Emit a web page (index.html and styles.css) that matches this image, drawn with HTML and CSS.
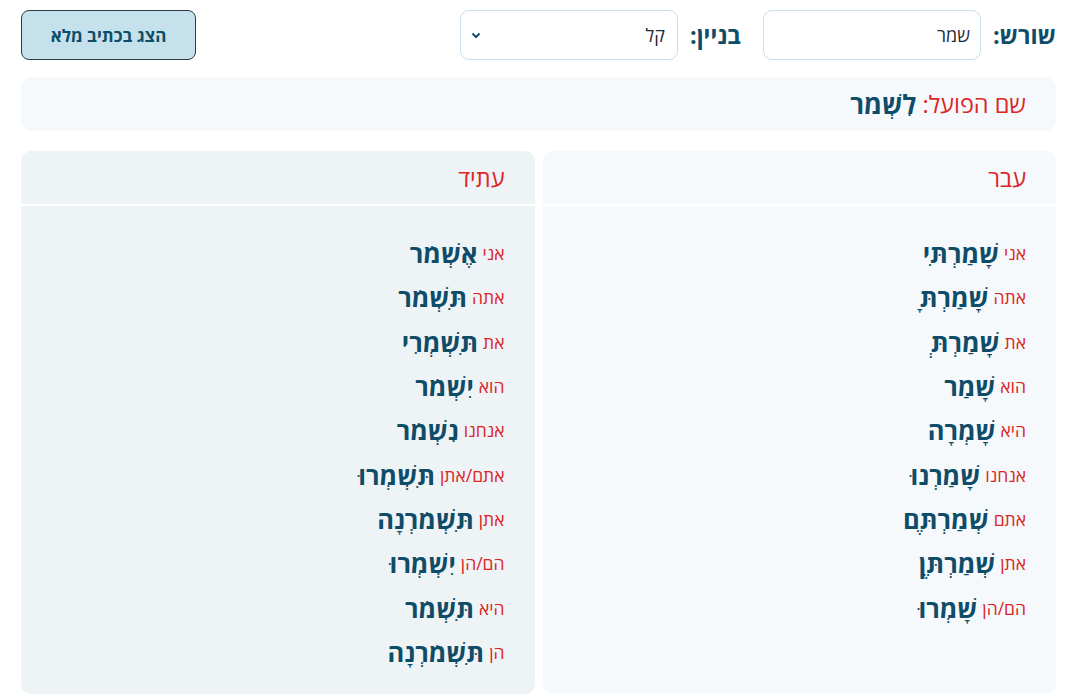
FILE: index.html
```html
<!DOCTYPE html>
<html lang="he" dir="rtl">
<head>
<meta charset="utf-8">
<link rel="stylesheet" href="styles.css">
</head>
<body>
<div class="page">
  <div class="toolbar">
    <div class="fields">
      <label class="label">שורש:</label>
      <div class="input">שמר</div>
      <label class="label">בניין:</label>
      <div class="select"><span>קל</span>
        <svg class="chev" width="10" height="7" viewBox="0 0 10 7"><path d="M1.5 1.5 L5 5 L8.5 1.5" fill="none" stroke="#164e63" stroke-width="2"/></svg>
      </div>
    </div>
    <button class="btn">הצג בכתיב מלא</button>
  </div>

  <div class="infinitive"><span class="red">שם הפועל:</span> <b class="verb">לִשְׁמֹר</b></div>

  <div class="tenses">
    <div class="tense past">
      <div class="head">עבר</div>
      <div class="body">
        <div class="row"><span class="pr">אני</span> <b class="verb">שָׁמַרְתִּי</b></div>
        <div class="row"><span class="pr">אתה</span> <b class="verb">שָׁמַרְתָּ</b></div>
        <div class="row"><span class="pr">את</span> <b class="verb">שָׁמַרְתְּ</b></div>
        <div class="row"><span class="pr">הוא</span> <b class="verb">שָׁמַר</b></div>
        <div class="row"><span class="pr">היא</span> <b class="verb">שָׁמְרָה</b></div>
        <div class="row"><span class="pr">אנחנו</span> <b class="verb">שָׁמַרְנוּ</b></div>
        <div class="row"><span class="pr">אתם</span> <b class="verb">שְׁמַרְתֶּם</b></div>
        <div class="row"><span class="pr">אתן</span> <b class="verb">שְׁמַרְתֶּן</b></div>
        <div class="row"><span class="pr">הם/הן</span> <b class="verb">שָׁמְרוּ</b></div>
      </div>
    </div>
    <div class="tense future">
      <div class="head">עתיד</div>
      <div class="body">
        <div class="row"><span class="pr">אני</span> <b class="verb">אֶשְׁמֹר</b></div>
        <div class="row"><span class="pr">אתה</span> <b class="verb">תִּשְׁמֹר</b></div>
        <div class="row"><span class="pr">את</span> <b class="verb">תִּשְׁמְרִי</b></div>
        <div class="row"><span class="pr">הוא</span> <b class="verb">יִשְׁמֹר</b></div>
        <div class="row"><span class="pr">אנחנו</span> <b class="verb">נִשְׁמֹר</b></div>
        <div class="row"><span class="pr">אתם/אתן</span> <b class="verb">תִּשְׁמְרוּ</b></div>
        <div class="row"><span class="pr">אתן</span> <b class="verb">תִּשְׁמֹרְנָה</b></div>
        <div class="row"><span class="pr">הם/הן</span> <b class="verb">יִשְׁמְרוּ</b></div>
        <div class="row"><span class="pr">היא</span> <b class="verb">תִּשְׁמֹר</b></div>
        <div class="row"><span class="pr">הן</span> <b class="verb">תִּשְׁמֹרְנָה</b></div>
      </div>
    </div>
  </div>
</div>
</body>
</html>
```

FILE: styles.css
```css
* { box-sizing: border-box; }
html, body { margin: 0; padding: 0; background: #fff; }
body {
  font-family: "Open Sans", "DejaVu Sans", sans-serif;
  color: #0f4c68;
}
.page {
  padding: 10px 36px 0 21px;
}
.toolbar {
  display: flex;
  justify-content: space-between;
  align-items: center;
  height: 50px;
}
.fields {
  display: flex;
  align-items: center;
}
.label {
  font-size: 23.5px;
  font-weight: 700;
  color: #0f4c68;
  margin-left: 12px;
}
.input, .select {
  height: 50px;
  width: 218px;
  border: 1px solid #c5e2ec;
  border-radius: 9px;
  font-size: 18px;
  color: #1f2937;
  display: flex;
  align-items: center;
  padding: 0 10px;
  background: #fff;
}
.input { margin-left: 22px; }
.select { justify-content: space-between; padding: 0 12px 0 10px; }
.btn {
  width: 175px;
  height: 50px;
  background: #c4e1ec;
  border: 1px solid #2e3d44;
  border-radius: 8px;
  font-family: inherit;
  font-size: 17px;
  font-weight: 700;
  color: #0f4c68;
  padding: 0;
}
.infinitive {
  margin-top: 17px;
  height: 54px;
  background: #f5f9fc;
  border-radius: 10px;
  padding: 0 30px;
  display: flex;
  align-items: center;
  gap: 6px;
  font-size: 23.5px;
}
.red { color: #dc2626; }
.verb { color: #0f4c68; font-weight: 700; }
.infinitive .verb { font-size: 26px; }
.tenses {
  margin-top: 20px;
  display: grid;
  grid-template-columns: 1fr 1fr;
  gap: 8px;
}
.tense {
  border-radius: 10px;
  overflow: hidden;
  min-height: 542px;
}
.past { background: #f5f9fc; }
.future { background: #eef3f6; }
.head {
  height: 55px;
  padding: 0 30px;
  display: flex;
  align-items: center;
  font-size: 23.5px;
  color: #dc2626;
  border-bottom: 2px solid #fff;
}
.body {
  padding: 25px 30px 20px;
}
.row {
  height: 44.3px;
  display: flex;
  align-items: center;
  gap: 5px;
}
.pr { color: #dc2626; font-size: 17.5px; }
.row .verb { font-size: 25.5px; }
```
